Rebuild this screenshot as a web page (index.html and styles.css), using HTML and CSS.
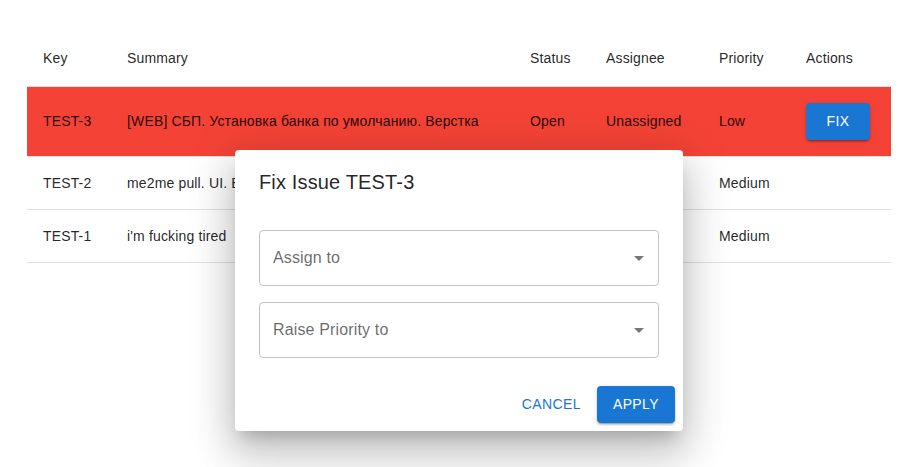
FILE: index.html
```html
<!DOCTYPE html>
<html lang="en">
<head>
<meta charset="utf-8">
<title>Issues</title>
<link rel="stylesheet" href="styles.css">
</head>
<body>
<div class="page">
  <table class="issues">
    <colgroup>
      <col class="c-key"><col class="c-summary"><col class="c-status"><col class="c-assignee"><col class="c-priority"><col class="c-actions">
    </colgroup>
    <thead>
      <tr class="head-row">
        <th>Key</th><th>Summary</th><th>Status</th><th>Assignee</th><th>Priority</th><th>Actions</th>
      </tr>
    </thead>
    <tbody>
      <tr class="row row-hot">
        <td>TEST-3</td>
        <td>[WEB] СБП. Установка банка по умолчанию. Верстка</td>
        <td>Open</td>
        <td>Unassigned</td>
        <td>Low</td>
        <td><button class="btn btn-contained">Fix</button></td>
      </tr>
      <tr class="row">
        <td>TEST-2</td>
        <td>me2me pull. UI. Верстка экрана</td>
        <td>Open</td>
        <td>Unassigned</td>
        <td>Medium</td>
        <td></td>
      </tr>
      <tr class="row">
        <td>TEST-1</td>
        <td>i'm fucking tired</td>
        <td>Open</td>
        <td>Unassigned</td>
        <td>Medium</td>
        <td></td>
      </tr>
    </tbody>
  </table>
</div>

<div class="dialog" role="dialog">
  <h2 class="dialog-title">Fix Issue TEST-3</h2>
  <div class="dialog-content">
    <div class="select">
      <span class="select-label">Assign to</span>
      <svg class="select-icon" viewBox="0 0 24 24" width="24" height="24"><path d="M7 10l5 5 5-5z"/></svg>
    </div>
    <div class="select">
      <span class="select-label">Raise Priority to</span>
      <svg class="select-icon" viewBox="0 0 24 24" width="24" height="24"><path d="M7 10l5 5 5-5z"/></svg>
    </div>
  </div>
  <div class="dialog-actions">
    <button class="btn btn-text">Cancel</button>
    <button class="btn btn-contained">Apply</button>
  </div>
</div>
</body>
</html>
```
FILE: styles.css
```css
* { box-sizing: border-box; }
html, body { margin: 0; padding: 0; background: #fff; }
body {
  font-family: "Liberation Sans", Arial, Helvetica, sans-serif;
  color: rgba(0,0,0,0.87);
  font-size: 14px;
}
.page { padding: 30px 25px 0 27px; }

.issues {
  width: 864px;
  border-collapse: collapse;
  table-layout: fixed;
}
.c-key { width: 84px; }
.c-summary { width: 403px; }
.c-status { width: 76px; }
.c-assignee { width: 113px; }
.c-priority { width: 87px; }
.c-actions { width: 101px; }

.issues th, .issues td {
  text-align: left;
  padding: 16px;
  border-bottom: 1px solid rgb(224,224,224);
  white-space: nowrap;
  overflow: hidden;
  vertical-align: middle;
  font-weight: 400;
  letter-spacing: 0.15px;
}
.issues th { line-height: 24px; }
.issues td { line-height: 20px; }
.row-hot { background: #f44336; }

.btn {
  font-family: "Liberation Sans", Arial, Helvetica, sans-serif;
  font-size: 14px;
  font-weight: 400;
  line-height: 24.5px;
  letter-spacing: 0.4px;
  text-transform: uppercase;
  border: 0;
  border-radius: 4px;
  cursor: pointer;
  min-width: 64px;
  background: transparent;
}
.btn-contained {
  background: #1976d2;
  color: #fff;
  padding: 6px 16px;
  box-shadow: 0px 3px 1px -2px rgba(0,0,0,0.2), 0px 2px 2px 0px rgba(0,0,0,0.14), 0px 1px 5px 0px rgba(0,0,0,0.12);
}
.btn-text {
  color: #1976d2;
  padding: 6px 8px;
}

.dialog {
  position: absolute;
  left: 235px;
  top: 150px;
  width: 448px;
  background: #fff;
  border-radius: 4px;
  box-shadow: 0px 11px 15px -7px rgba(0,0,0,0.2), 0px 24px 38px 3px rgba(0,0,0,0.14), 0px 9px 46px 8px rgba(0,0,0,0.12);
}
.dialog-title {
  margin: 0;
  padding: 16px 24px;
  font-size: 20px;
  font-weight: 400;
  line-height: 32px;
  letter-spacing: 0.15px;
}
.dialog-content {
  padding: 16px 24px 20px;
  display: flex;
  flex-direction: column;
  gap: 16px;
}
.select {
  height: 56px;
  border: 1px solid rgba(0,0,0,0.23);
  border-radius: 4px;
  display: flex;
  align-items: center;
  padding: 0 7px 0 13px;
}
.select-label {
  flex: 1;
  font-size: 16px;
  color: rgba(0,0,0,0.6);
  letter-spacing: 0.15px;
}
.select-icon { fill: rgba(0,0,0,0.54); }
.dialog-actions {
  padding: 8px;
  display: flex;
  justify-content: flex-end;
  gap: 8px;
}
```
